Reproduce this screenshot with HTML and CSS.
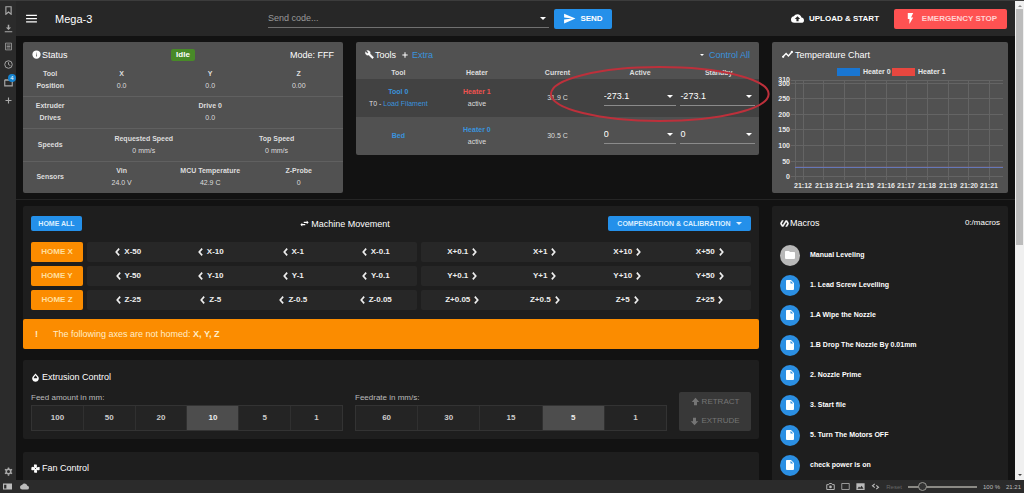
FILE: index.html
```html
<!DOCTYPE html>
<html lang="en">
<head>
<meta charset="utf-8">
<title>Mega-3</title>
<link rel="stylesheet" href="styles.css">
</head>
<body>
<svg class="defs" aria-hidden="true">
  <symbol id="menu" viewBox="0 0 24 24"><path d="M2 5h20v2.500H2zM2 11h20v2.500H2zM2 17h20v2.500H2z"/></symbol>
  <symbol id="send" viewBox="0 0 24 24"><path d="M2 21L23 12L2 3V10L17 12L2 14V21Z"/></symbol>
  <symbol id="cloud-up" viewBox="0 0 24 24"><path d="M14 13V17H10V13H7L12 8L17 13M19.350 10.030C18.670 6.590 15.640 4 12 4C9.110 4 6.600 5.640 5.350 8.030C2.340 8.360 0 10.900 0 14A6 6 0 0 0 6 20H19A5 5 0 0 0 24 15C24 12.360 21.950 10.220 19.350 10.030Z"/></symbol>
  <symbol id="cloud" viewBox="0 0 24 24"><path d="M19.350 10.030C18.670 6.590 15.640 4 12 4C9.110 4 6.600 5.640 5.350 8.030C2.340 8.360 0 10.900 0 14A6 6 0 0 0 6 20H19A5 5 0 0 0 24 15C24 12.360 21.950 10.220 19.350 10.030Z"/></symbol>
  <symbol id="flash" viewBox="0 0 24 24"><path d="M7 2V13H10V22L17 10H13L17 2H7Z"/></symbol>
  <symbol id="info" viewBox="0 0 24 24"><path d="M13 9H11V7H13M13 17H11V11H13M12 1A11 11 0 0 0 1 12A11 11 0 0 0 12 23A11 11 0 0 0 23 12A11 11 0 0 0 12 1Z"/></symbol>
  <symbol id="wrench" viewBox="0 0 24 24"><path d="M22.700 19L13.600 9.900C14.500 7.600 14 4.900 12.100 3C10.100 1 7.100 .6 4.700 1.700L9 6L6 9L1.600 4.700C.4 7.100 .9 10.100 2.900 12.100C4.800 14 7.500 14.500 9.800 13.600L18.900 22.700C19.300 23.100 19.900 23.100 20.300 22.700L22.600 20.400C23.100 20 23.100 19.300 22.700 19Z" stroke="currentColor"/></symbol>
  <symbol id="trend" viewBox="0 0 24 24"><path d="M2 17L9 10L14 15L22 6" fill="none" stroke="currentColor" stroke-width="3"/><circle cx="2.500" cy="17" r="2.500"/><circle cx="21.500" cy="6.500" r="2.500"/></symbol>
  <symbol id="swap" viewBox="0 0 24 24"><path d="M23 9L18 4V7.500H10V10.500H18V14M6 10L1 15L6 20V16.500H14V13.500H6V10Z"/></symbol>
  <symbol id="left" viewBox="0 0 12 24"><path d="M10 4L3 12L10 20" fill="none" stroke="currentColor" stroke-width="4"/></symbol>
  <symbol id="right" viewBox="0 0 12 24"><path d="M2 4L9 12L2 20" fill="none" stroke="currentColor" stroke-width="4"/></symbol>
  <symbol id="macro" viewBox="0 0 24 24"><path d="M19 4H15L7.110 16.630L4.500 12L9 4H5L.5 12L5 20H9L16.890 7.370L19.500 12L15 20H19L23.500 12L19 4Z" stroke="currentColor"/></symbol>
  <symbol id="folder" viewBox="0 0 24 24"><path d="M10 4H4C2.890 4 2 4.890 2 6V18A2 2 0 0 0 4 20H20A2 2 0 0 0 22 18V8C22 6.890 21.100 6 20 6H12L10 4Z"/></symbol>
  <symbol id="file" viewBox="0 0 24 24"><path d="M13 9V3.500L18.500 9M6 2C4.890 2 4 2.890 4 4V20A2 2 0 0 0 6 22H18A2 2 0 0 0 20 20V8L14 2H6Z"/></symbol>
  <symbol id="drop" viewBox="0 0 24 24"><path fill-rule="evenodd" d="M12 1L5 9C1 14 4 23 12 23S23 14 19 9ZM12 6L16 11Q17 13 16.500 14H7.500Q7 13 8 11Z"/></symbol>
  <symbol id="fan" viewBox="0 0 24 24"><path fill-rule="evenodd" d="M8 1H15Q17 5 15 9Q19 7 23 8V15Q20 18 15 15Q17 19 16 23H9Q7 19 9 15Q5 17 1 16V9Q5 6 9 9Q7 5 8 1ZM12 10.500A1.500 1.500 0 1 0 12 13.500A1.500 1.500 0 1 0 12 10.500"/></symbol>
  <symbol id="up" viewBox="0 0 24 24"><path d="M16 22H8V13H2L12 2L22 13H16Z"/></symbol>
  <symbol id="down" viewBox="0 0 24 24"><path d="M16 2H8V11H2L12 22L22 11H16Z"/></symbol>
  <symbol id="plus" viewBox="0 0 24 24"><path d="M10.500 4H13.500V10.500H20V13.500H13.500V20H10.500V13.500H4V10.500H10.500Z"/></symbol>
  <symbol id="bookmark" viewBox="0 0 24 24"><path d="M5 2H19V22L12 16L5 22Z" fill="none" stroke="currentColor" stroke-width="3"/></symbol>
  <symbol id="download" viewBox="0 0 24 24"><path d="M10 2H14V9H19L12 16L5 9H10ZM2 19H22V22H2Z"/></symbol>
  <symbol id="notes" viewBox="0 0 24 24"><path d="M4 3H20V21H4ZM7 8H17M7 12H17M7 16H17" fill="none" stroke="currentColor" stroke-width="2"/></symbol>
  <symbol id="clock" viewBox="0 0 24 24"><path d="M12 2A10 10 0 1 0 12 22A10 10 0 1 0 12 2M12 6V12L17 15" fill="none" stroke="currentColor" stroke-width="2.500"/></symbol>
  <symbol id="window" viewBox="0 0 24 24"><path d="M2 6H22V21H2ZM2 5H12" fill="none" stroke="currentColor" stroke-width="3"/></symbol>
  <symbol id="gear" viewBox="0 0 24 24"><circle cx="12" cy="12" r="6" fill="none" stroke="currentColor" stroke-width="4"/><path d="M12 1V5M12 19V23M2.500 6.500L6 8.500M18 15.500L21.500 17.500M2.500 17.500L6 15.500M18 8.500L21.500 6.500" stroke="currentColor" stroke-width="4"/></symbol>
  <symbol id="panel" viewBox="0 0 24 18"><path fill-rule="evenodd" d="M0 1H24V17H0ZM3 4V14H9V4Z"/></symbol>
  <symbol id="camera" viewBox="0 0 24 24"><path d="M2 7H7L9 4H15L17 7H22V20H2Z" fill="none" stroke="currentColor" stroke-width="2.500"/><circle cx="12" cy="13" r="3.500"/></symbol>
  <symbol id="frame" viewBox="0 0 24 24"><path d="M2 4H22V20H2Z" fill="none" stroke="currentColor" stroke-width="2"/></symbol>
  <symbol id="image" viewBox="0 0 24 24"><path fill-rule="evenodd" d="M1 3H23V21H1ZM4 18H20L15 10L11 15L8 12Z"/></symbol>
  <symbol id="code" viewBox="0 0 24 24"><path d="M10 5L4 10L10 15M14 9L20 14L14 19" fill="none" stroke="currentColor" stroke-width="3"/></symbol>
</svg>

<div class="browser">
  <nav class="rail" aria-label="Browser panels">
    <button aria-label="Bookmarks"><svg><use href="#bookmark"/></svg></button>
    <button aria-label="Downloads"><svg><use href="#download"/></svg></button>
    <button aria-label="Notes"><svg><use href="#notes"/></svg></button>
    <button aria-label="History"><svg><use href="#clock"/></svg></button>
    <button aria-label="Windows" class="has-badge"><svg><use href="#window"/></svg><span class="badge">4</span></button>
    <button aria-label="Add panel"><svg><use href="#plus"/></svg></button>
    <button aria-label="Settings" class="settings"><svg><use href="#gear"/></svg></button>
  </nav>

  <div class="page">
    <header class="appbar">
      <button class="menu" aria-label="Menu"><svg><use href="#menu"/></svg></button>
      <h1>Mega-3</h1>
      <div class="code">
        <label class="field"><input type="text" placeholder="Send code..." aria-label="Send code"><i class="caret"></i></label>
        <button class="btn blue send"><svg><use href="#send"/></svg>SEND</button>
      </div>
      <button class="btn upload"><svg><use href="#cloud-up"/></svg>UPLOAD &amp; START</button>
      <button class="btn stop"><svg><use href="#flash"/></svg>EMERGENCY STOP</button>
    </header>

    <section class="overview">
      <article class="card light">
        <header class="title status-title">
          <h2><svg><use href="#info"/></svg>Status</h2><span class="idle">Idle</span><span class="mode">Mode: FFF</span>
        </header>
        <table class="status">
          <colgroup><col class="label-col"><col span="6"></colgroup>
          <tr><th>Tool<br>Position</th><td colspan="2"><b>X</b>0.0</td><td colspan="2"><b>Y</b>0.0</td><td colspan="2"><b>Z</b>0.00</td></tr>
          <tr><th>Extruder<br>Drives</th><td colspan="6"><b>Drive 0</b>0.0</td></tr>
          <tr><th>Speeds</th><td colspan="3"><b>Requested Speed</b>0 mm/s</td><td colspan="3"><b>Top Speed</b>0 mm/s</td></tr>
          <tr><th>Sensors</th><td colspan="2"><b>Vin</b>24.0 V</td><td colspan="2"><b>MCU Temperature</b>42.9 C</td><td colspan="2"><b>Z-Probe</b>0</td></tr>
        </table>
      </article>

      <article class="card light tools-card">
        <header class="title">
          <h2><svg><use href="#wrench"/></svg>Tools</h2>
          <a href="#" class="extra"><svg><use href="#plus"/></svg>Extra</a>
          <a href="#" class="control"><i class="caret small"></i>Control All</a>
        </header>
        <table class="tools">
          <colgroup><col class="c-tool"><col class="c-heater"><col class="c-current"><col class="c-active"><col class="c-standby"></colgroup>
          <thead><tr><th>Tool</th><th>Heater</th><th>Current</th><th>Active</th><th>Standby</th></tr></thead>
          <tbody>
            <tr class="selected">
              <td><a href="#"><b>Tool 0</b></a><small>T0 - <a href="#">Load Filament</a></small></td>
              <td><a href="#" class="red"><b>Heater 1</b></a><small>active</small></td>
              <td>31.9 C</td>
              <td><label class="field"><select aria-label="Tool 0 active"><option>-273.1</option></select><i class="caret"></i></label></td>
              <td><label class="field"><select aria-label="Tool 0 standby"><option>-273.1</option></select><i class="caret"></i></label></td>
            </tr>
            <tr>
              <td><a href="#"><b>Bed</b></a></td>
              <td><a href="#"><b>Heater 0</b></a><small>active</small></td>
              <td>30.5 C</td>
              <td><label class="field"><select aria-label="Bed active"><option>0</option></select><i class="caret"></i></label></td>
              <td><label class="field"><select aria-label="Bed standby"><option>0</option></select><i class="caret"></i></label></td>
            </tr>
          </tbody>
        </table>
        <svg class="marker" viewBox="0 0 220 58" preserveAspectRatio="none"><ellipse cx="110" cy="29" rx="108" ry="27"/></svg>
      </article>

      <article class="card light">
        <header class="title"><h2><svg class="wide"><use href="#trend"/></svg>Temperature Chart</h2></header>
        <svg class="chart" viewBox="0 0 236 128" role="img" aria-label="Heater temperatures">
          <rect x="65" y="4" width="23" height="8" fill="#1976d2"/><text x="91" y="10">Heater 0</text>
          <rect x="120" y="4" width="23" height="8" fill="#e8473f"/><text x="146" y="10">Heater 1</text>
          <path class="grid" d="M19 16.500H231M19 19.500H231M19 34.500H231M19 50.500H231M19 65.500H231M19 81.500H231M19 97.500H231M19 112.500H231M23.500 16V116M31.500 16V116M51.500 16V116M72.500 16V116M93.500 16V116M114.500 16V116M134.500 16V116M155.500 16V116M176.500 16V116M196.500 16V116M217.500 16V116"/>
          <path d="M23 103.500H231" stroke="#6478b8" fill="none"/>
          <path d="M23 102.500H231" stroke="#80606a" stroke-opacity=".4" fill="none"/>
          <g text-anchor="end"><text x="18" y="18">310</text><text x="18" y="22">300</text><text x="18" y="37">250</text><text x="18" y="53">200</text><text x="18" y="68">150</text><text x="18" y="84">100</text><text x="18" y="100">50</text><text x="18" y="115">0</text></g>
          <g text-anchor="middle"><text x="31" y="124">21:12</text><text x="52" y="124">21:13</text><text x="72" y="124">21:14</text><text x="93" y="124">21:15</text><text x="114" y="124">21:16</text><text x="134" y="124">21:17</text><text x="155" y="124">21:18</text><text x="176" y="124">21:19</text><text x="197" y="124">21:20</text><text x="217" y="124">21:21</text></g>
        </svg>
      </article>
    </section>

    <section class="lower">
      <div class="main">
        <article class="card">
          <header class="move-title">
            <button class="btn blue tiny">HOME ALL</button>
            <h2><svg><use href="#swap"/></svg>Machine Movement</h2>
            <button class="btn blue tiny comp">COMPENSATION &amp; CALIBRATION<i class="caret"></i></button>
          </header>
          <div class="moves">
            <button class="btn orange">HOME X</button>
            <div class="jog"><button><svg><use href="#left"/></svg>X-50</button><button><svg><use href="#left"/></svg>X-10</button><button><svg><use href="#left"/></svg>X-1</button><button><svg><use href="#left"/></svg>X-0.1</button></div>
            <div class="jog"><button>X+0.1<svg><use href="#right"/></svg></button><button>X+1<svg><use href="#right"/></svg></button><button>X+10<svg><use href="#right"/></svg></button><button>X+50<svg><use href="#right"/></svg></button></div>
            <button class="btn orange">HOME Y</button>
            <div class="jog"><button><svg><use href="#left"/></svg>Y-50</button><button><svg><use href="#left"/></svg>Y-10</button><button><svg><use href="#left"/></svg>Y-1</button><button><svg><use href="#left"/></svg>Y-0.1</button></div>
            <div class="jog"><button>Y+0.1<svg><use href="#right"/></svg></button><button>Y+1<svg><use href="#right"/></svg></button><button>Y+10<svg><use href="#right"/></svg></button><button>Y+50<svg><use href="#right"/></svg></button></div>
            <button class="btn orange">HOME Z</button>
            <div class="jog"><button><svg><use href="#left"/></svg>Z-25</button><button><svg><use href="#left"/></svg>Z-5</button><button><svg><use href="#left"/></svg>Z-0.5</button><button><svg><use href="#left"/></svg>Z-0.05</button></div>
            <div class="jog"><button>Z+0.05<svg><use href="#right"/></svg></button><button>Z+0.5<svg><use href="#right"/></svg></button><button>Z+5<svg><use href="#right"/></svg></button><button>Z+25<svg><use href="#right"/></svg></button></div>
          </div>
          <p class="alert"><span class="bang">!</span><span>The following axes are not homed: <b>X, Y, Z</b></span></p>
        </article>

        <article class="card extrusion">
          <h2><svg><use href="#drop"/></svg>Extrusion Control</h2>
          <div class="feeds">
            <div class="feed"><p id="amount">Feed amount in mm:</p>
              <div class="toggle" role="group" aria-labelledby="amount"><button>100</button><button>50</button><button>20</button><button class="on">10</button><button>5</button><button>1</button></div></div>
            <div class="feed"><p id="rate">Feedrate in mm/s:</p>
              <div class="toggle" role="group" aria-labelledby="rate"><button>60</button><button>30</button><button>15</button><button class="on">5</button><button>1</button></div></div>
            <div class="extrude"><button disabled><svg><use href="#up"/></svg>RETRACT</button><button disabled><svg><use href="#down"/></svg>EXTRUDE</button></div>
          </div>
        </article>

        <article class="card fan"><h2><svg><use href="#fan"/></svg>Fan Control</h2></article>
      </div>

      <article class="card macros">
        <header><h2><svg><use href="#macro"/></svg>Macros</h2><span>0:/macros</span></header>
        <ul>
          <li><i class="disc grey"><svg><use href="#folder"/></svg></i>Manual Leveling</li>
          <li><i class="disc"><svg><use href="#file"/></svg></i>1. Lead Screw Levelling</li>
          <li><i class="disc"><svg><use href="#file"/></svg></i>1.A Wipe the Nozzle</li>
          <li><i class="disc"><svg><use href="#file"/></svg></i>1.B Drop The Nozzle By 0.01mm</li>
          <li><i class="disc"><svg><use href="#file"/></svg></i>2. Nozzle Prime</li>
          <li><i class="disc"><svg><use href="#file"/></svg></i>3. Start file</li>
          <li><i class="disc"><svg><use href="#file"/></svg></i>5. Turn The Motors OFF</li>
          <li><i class="disc"><svg><use href="#file"/></svg></i>check power is on</li>
        </ul>
      </article>
    </section>
  </div>

  <div class="scroll" aria-hidden="true"><i class="arrow-up"></i><i class="thumb"></i><i class="arrow-down"></i></div>

  <footer class="bar">
    <button aria-label="Toggle panel"><svg><use href="#panel"/></svg></button>
    <button aria-label="Sync" class="sync"><svg><use href="#cloud"/></svg></button>
    <span class="spacer"></span>
    <button aria-label="Capture page"><svg><use href="#camera"/></svg></button>
    <button aria-label="Tiling"><svg><use href="#frame"/></svg></button>
    <button aria-label="Images"><svg><use href="#image"/></svg></button>
    <button aria-label="Page actions"><svg><use href="#code"/></svg></button>
    <button class="reset">Reset</button>
    <input type="range" min="0" max="100" value="16" aria-label="Zoom">
    <output>100 %</output>
    <time>21:21</time>
  </footer>
</div>
</body>
</html>
```
FILE: styles.css
```css
* { box-sizing: border-box; }
body { margin: 0; background: #121212; color: #fff; font: 8px/12px "Liberation Sans", Arial, sans-serif; overflow: hidden; }
h1, h2, p, ul { margin: 0; padding: 0; font-weight: 400; }
button, input, select { font: inherit; color: inherit; background: none; border: 0; padding: 0; margin: 0; outline: 0; }
a { color: #3a93dd; text-decoration: none; }
svg { fill: currentColor; width: 9px; height: 9px; flex: none; display: block; }
.defs { display: none; }

.browser { display: grid; grid-template: minmax(0, 1fr) 13px / 16px minmax(0, 1fr) 9px; height: 100vh; border-top: 1px solid #3c3c3c; }
.page { overflow: hidden; }

.rail { background: #2b2b2b; color: #aaa; display: flex; flex-direction: column; align-items: center; }
.rail button { height: 18px; width: 16px; display: flex; align-items: center; justify-content: center; }
.rail .settings { margin-top: auto; }
.has-badge { position: relative; }
.badge { position: absolute; right: 0; top: 1px; width: 8px; height: 8px; border-radius: 4px; background: #1583cf; color: #fff; font-size: 6px; line-height: 8px; text-align: center; }

.appbar { height: 35px; background: #272727; display: flex; align-items: center; padding: 0 8px 0 9px; }
.menu svg { width: 13px; height: 13px; }
h1 { font-size: 11px; margin-left: 17px; width: 213px; }
.code { display: flex; flex: 1; gap: 5px; margin-right: 170px; align-items: center; }
.field { display: flex; align-items: center; border-bottom: 1px solid #8b8b8b; height: 18px; padding-right: 3px; }
.field input, .field select { flex: 1; min-width: 0; appearance: none; }
.code .field { flex: 1; font-size: 9px; border-color: #707070; }
input::placeholder { color: #999; opacity: 1; }
.caret { border: 3px solid transparent; border-top-color: currentColor; border-bottom: 0; display: block; flex: none; }
.caret.small { border-width: 2px; border-bottom: 0; }
.btn { display: flex; align-items: center; justify-content: center; border-radius: 2px; height: 20px; font-weight: 700; white-space: nowrap; }
.btn svg { width: 13px; height: 13px; }
.blue { background: #2490ea; }
.send { width: 58px; gap: 4px; }
.upload { width: 106px; gap: 5px; margin-right: 6px; }
.stop { width: 113px; gap: 5px; background: #ff5252; color: #ffd2d2; }
.stop svg { color: #fff; }

.overview, .lower { display: grid; gap: 13px; padding: 6px 7px; }
.overview { grid-template-columns: 320fr 403fr 236fr; border-bottom: 1px solid #252525; }
.lower { grid-template-columns: 736fr 236fr; }
.card { background: #1e1e1e; border-radius: 2px; min-width: 0; }
.light { background: #515151; }
h2 { font-size: 9px; line-height: 12px; display: flex; align-items: center; gap: 2px; white-space: nowrap; }
.title { display: flex; align-items: center; height: 22px; padding: 3px 9px 0; font-size: 9px; }
.title h2 { gap: 1px; }
.status-title { display: grid; grid-template-columns: 1fr auto 1fr; }
.idle { background: #488a28; border-radius: 2px; padding: 0 5px; font-size: 8px; font-weight: 700; }
.mode { text-align: right; }
table { width: 100%; table-layout: fixed; border-collapse: collapse; color: #ddd; }
th, td { padding: 0; text-align: center; font-size: 7px; line-height: 12px; }
td b, td small { display: block; font-size: 7px; }
.label-col { width: 17%; }
.status tr { height: 32px; }
.status tr:nth-child(3) { height: 33px; }
.status tr + tr { border-top: 1px solid #606060; }

.tools-card { position: relative; align-self: start; }
.extra { display: flex; align-items: center; gap: 3px; margin-left: 5px; }
.extra svg { color: #fff; width: 8px; height: 8px; }
.control { margin-left: auto; display: flex; align-items: center; gap: 5px; }
.control .caret { color: #fff; }
.c-tool { width: 21%; }
.c-heater { width: 18%; }
.c-current { width: 22%; }
.c-active { width: 19%; }
.c-standby { width: 20%; }
.tools thead th { padding-top: 3px; }
.tools tbody tr { height: 38px; }
.tools .selected { background: #424242; }
.tools .field { margin: 0 2px 3px; font-size: 9px; color: #fff; height: 18px; }
.tools td:last-child .field { margin-right: 4px; }
.red { color: #ef5350; }
.marker { position: absolute; left: 48%; top: 23px; width: 55%; height: 58px; fill: none; stroke: #bd303b; stroke-width: 2; pointer-events: none; }
.wide { width: 13px; height: 11px; }
.chart { width: 100%; height: auto; }
.chart text { font-size: 7px; font-weight: 700; fill: #e8e8e8; }
.grid { stroke: #646464; fill: none; }

.move-title { display: flex; justify-content: space-between; align-items: center; padding: 10px 8px 11px; }
.tiny { height: 15px; font-size: 7px; width: 51px; color: #dcefff; }
.comp { width: 143px; gap: 5px; }
.moves { display: grid; grid-template-columns: 52px 1fr 1fr; gap: 4px; padding: 0 8px 9px; }
.orange { background: #fb8c00; color: #ffdf9e; }
.jog { display: flex; background: #272727; border-radius: 2px; }
.jog button { flex: 1; display: flex; align-items: center; justify-content: center; gap: 4px; font-weight: 700; color: #eee; }
.jog svg { width: 5px; height: 10px; }
.alert { display: flex; background: #fb8c00; border-radius: 2px; color: #ffedc8; font-size: 9px; padding: 9px 12px; }
.bang { width: 18px; font-weight: 700; }
.extrusion { margin-top: 11px; padding: 11px 8px 8px; }
.feeds { display: grid; grid-template-columns: 312fr 312fr 72fr; gap: 12px; align-items: end; margin-top: 8px; }
.feed p { color: #bbb; line-height: 14px; }
.toggle { display: flex; border: 1px solid #333; background: #242424; height: 26px; }
.toggle button { flex: 1; font-weight: 700; color: #ccc; }
.toggle button + button { border-left: 1px solid #303030; }
.toggle .on { background: #4d4d4d; color: #eee; }
.extrude { background: #383838; height: 39px; display: grid; grid-template-rows: 1fr 1fr; border-radius: 2px; }
.extrude button { display: flex; align-items: center; justify-content: center; gap: 2px; color: #757575; }
.fan { margin-top: 13px; padding: 10px 8px 40px; }
.macros { padding: 11px 8px; }
.macros header { display: flex; justify-content: space-between; margin-bottom: 11px; }
.macros h2 { gap: 1px; }
.macros ul { list-style: none; }
.macros li { height: 30px; display: flex; align-items: center; gap: 10px; font-size: 7px; font-weight: 700; }
.disc { width: 20px; height: 21px; border-radius: 50%; background: #2b8fe3; display: flex; align-items: center; justify-content: center; }
.grey { background: #b8b8b8; }
.disc svg { width: 12px; height: 12px; }

.scroll { background: #f0f0f0; display: flex; flex-direction: column; align-items: center; padding: 4px 0; }
.thumb { background: #bcbcbc; width: 7px; flex: 0 0 50%; margin-top: 2px; }
.arrow-up, .arrow-down { border: 2px solid transparent; }
.arrow-up { border-bottom-color: #888; border-top: 0; }
.arrow-down { border-top-color: #444; border-bottom: 0; margin-top: auto; }
.bar { grid-column: 1 / -1; background: #2b2b2b; color: #bbb; display: flex; align-items: center; gap: 6px; padding: 0 3px; font-size: 6px; white-space: nowrap; }
.sync { margin-left: 2px; }
.bar .spacer { flex: 1; }
.reset { color: #666; }
.bar input { appearance: none; width: 69px; height: 8px; background: linear-gradient(#8b8a85, #8b8a85) center / 100% 2px no-repeat; }
.bar input::-webkit-slider-thumb { appearance: none; width: 9px; height: 9px; border-radius: 50%; background: #333; border: 1px solid #9a9a95; }
```
